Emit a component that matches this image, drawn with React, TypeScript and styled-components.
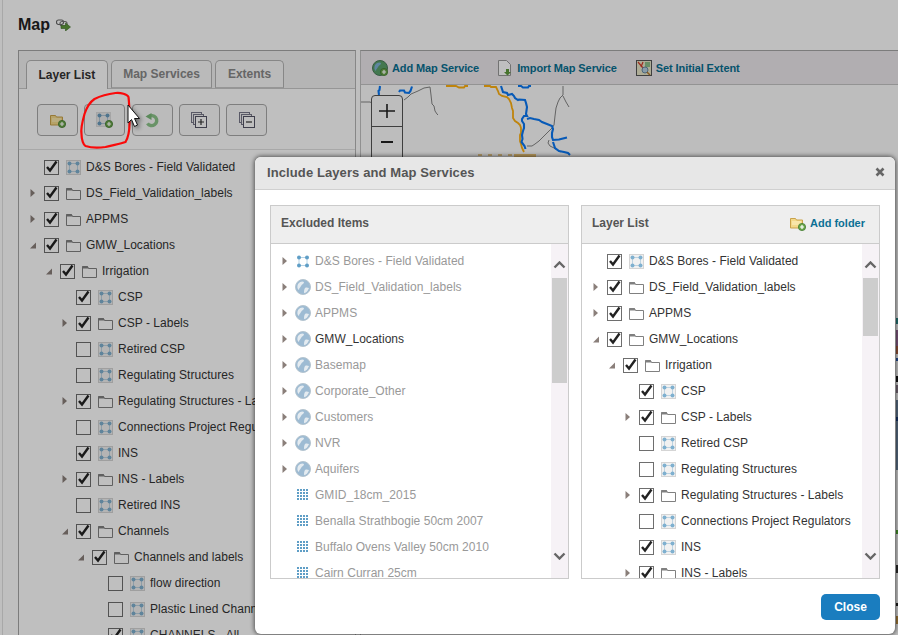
import React from "react";
import styled, { createGlobalStyle } from "styled-components";

type IconKind = "layer" | "layerPlain" | "folder" | "globe" | "grid";
type Arrow = "none" | "closed" | "open";
type Item = { label: string; depth: number; arrow: Arrow; checked: boolean; icon: IconKind };

const Layers: Item[] = [
    { label: "D&S Bores - Field Validated", depth: 0, arrow: "none", checked: true, icon: "layer" },
    { label: "DS_Field_Validation_labels", depth: 0, arrow: "closed", checked: true, icon: "folder" },
    { label: "APPMS", depth: 0, arrow: "closed", checked: true, icon: "folder" },
    { label: "GMW_Locations", depth: 0, arrow: "open", checked: true, icon: "folder" },
    { label: "Irrigation", depth: 1, arrow: "open", checked: true, icon: "folder" },
    { label: "CSP", depth: 2, arrow: "none", checked: true, icon: "layer" },
    { label: "CSP - Labels", depth: 2, arrow: "closed", checked: true, icon: "folder" },
    { label: "Retired CSP", depth: 2, arrow: "none", checked: false, icon: "layer" },
    { label: "Regulating Structures", depth: 2, arrow: "none", checked: false, icon: "layer" },
    { label: "Regulating Structures - Labels", depth: 2, arrow: "closed", checked: true, icon: "folder" },
    { label: "Connections Project Regulators", depth: 2, arrow: "none", checked: false, icon: "layer" },
    { label: "INS", depth: 2, arrow: "none", checked: true, icon: "layer" },
    { label: "INS - Labels", depth: 2, arrow: "closed", checked: true, icon: "folder" },
];

const MoreLayers: Item[] = [
    { label: "Retired INS", depth: 2, arrow: "none", checked: false, icon: "layer" },
    { label: "Channels", depth: 2, arrow: "open", checked: true, icon: "folder" },
    { label: "Channels and labels", depth: 3, arrow: "open", checked: true, icon: "folder" },
    { label: "flow direction", depth: 4, arrow: "none", checked: false, icon: "layer" },
    { label: "Plastic Lined Channels", depth: 4, arrow: "none", checked: false, icon: "layer" },
    { label: "CHANNELS - All", depth: 4, arrow: "none", checked: true, icon: "layer" },
];

const Excluded: { label: string; icon: IconKind; arrow: boolean; active?: boolean }[] = [
    { label: "D&S Bores - Field Validated", icon: "layerPlain", arrow: true },
    { label: "DS_Field_Validation_labels", icon: "globe", arrow: true },
    { label: "APPMS", icon: "globe", arrow: true },
    { label: "GMW_Locations", icon: "globe", arrow: true, active: true },
    { label: "Basemap", icon: "globe", arrow: true },
    { label: "Corporate_Other", icon: "globe", arrow: true },
    { label: "Customers", icon: "globe", arrow: true },
    { label: "NVR", icon: "globe", arrow: true },
    { label: "Aquifers", icon: "globe", arrow: true },
    { label: "GMID_18cm_2015", icon: "grid", arrow: false },
    { label: "Benalla Strathbogie 50cm 2007", icon: "grid", arrow: false },
    { label: "Buffalo Ovens Valley 50cm 2010", icon: "grid", arrow: false },
    { label: "Cairn Curran 25cm", icon: "grid", arrow: false },
];

function GreenPlus({ x, y }: { x: number; y: number }) {
    return (
        <g>
            <circle cx={x} cy={y} r="3.6" fill="#6fa84f" stroke="#3f7a2c" strokeWidth="0.8" />
            <path d={`M${x - 2} ${y}h4M${x} ${y - 2}v4`} stroke="#fff" strokeWidth="1.2" />
        </g>
    );
}

function LayerDots({ color }: { color: string }) {
    return (
        <g>
            <path d="M4 3.5h7M4 11.5h7M3.5 4v7M11.5 4v7" stroke={color} strokeWidth="1" opacity="0.45" />
            <circle cx="3.5" cy="3.5" r="2" fill={color} />
            <circle cx="11.5" cy="3.5" r="2" fill={color} />
            <circle cx="3.5" cy="11.5" r="2" fill={color} />
            <circle cx="11.5" cy="11.5" r="2" fill={color} />
        </g>
    );
}

function TreeIcon({ kind }: { kind: IconKind }) {
    if (kind === "layer") {
        return (
            <svg width="15" height="15" viewBox="0 0 15 15">
                <rect x="0.5" y="0.5" width="14" height="14" fill="#f1f1f1" stroke="#d5d5d5" />
                <LayerDots color="#7fb0cf" />
            </svg>
        );
    }
    if (kind === "layerPlain") {
        return (
            <svg width="16" height="15" viewBox="-0.5 0 16 15">
                <LayerDots color="#5f9ec6" />
            </svg>
        );
    }
    if (kind === "folder") {
        return (
            <svg width="15" height="15" viewBox="0 0 15 15">
                <path d="M0.5 2.5h5l1 2h8v9h-14z" fill="#fff" stroke="#808080" />
                <path d="M0.5 2h5l1 2.500h-6z" fill="#808080" />
            </svg>
        );
    }
    if (kind === "globe") {
        return (
            <svg width="16" height="16" viewBox="0 0 16 16">
                <circle cx="8" cy="8" r="7.5" fill="#9dbbd3" stroke="#b5c4cf" />
                <path d="M3 5c2-3 5-3 6-2 0 2-2 2-3 4s-2 2-2 4c-2-1-2-4-1-6z" fill="#e4ebf0" />
                <path d="M10 9c2-1 3 0 4 0-1 3-3 5-5 5 0-2 0-3 1-5z" fill="#e4ebf0" />
            </svg>
        );
    }
    const dots: React.ReactNode[] = [];
    for (let r = 0; r < 4; r++) {
        for (let c = 0; c < 4; c++) {
            dots.push(<rect key={`${r}-${c}`} x={2 + c * 3} y={2 + r * 3} width="2" height="2" fill="#5f9ec6" />);
        }
    }
    return (
        <svg width="16" height="16" viewBox="0 0 16 16">
            {dots}
        </svg>
    );
}

function CheckMark() {
    return (
        <svg width="15" height="15" viewBox="0 0 15 15">
            <path d="M3 7l3 3.500L12.500 1.500" fill="none" stroke="#222" strokeWidth="2.400" />
        </svg>
    );
}

function ExpandArrow({ kind }: { kind: Arrow }) {
    if (kind === "none") return null;
    return (
        <svg width="8" height="10" viewBox="0 0 8 10">
            {kind === "closed" ? <path d="M1.500 1l4.500 4-4.500 4z" fill="#8a7f7a" /> : <path d="M7 2.500v6h-6z" fill="#8a7f7a" />}
        </svg>
    );
}

function LayerRow({ item }: { item: Item }) {
    return (
        <TreeRow $depth={item.depth}>
            <ArrowSlot>
                <ExpandArrow kind={item.arrow} />
            </ArrowSlot>
            <CheckBox>{item.checked && <CheckMark />}</CheckBox>
            <TreeIcon kind={item.icon} />
            <RowLabel>{item.label}</RowLabel>
        </TreeRow>
    );
}

function ScrollBar({ thumb }: { thumb: number }) {
    return (
        <Track>
            <UpButton>
                <svg width="13" height="8" viewBox="0 0 13 8">
                    <path d="M1.500 6.500l5-5 5 5" fill="none" stroke="#666" strokeWidth="2.400" />
                </svg>
            </UpButton>
            <Thumb $height={thumb} />
            <Spacer />
            <DownButton>
                <svg width="13" height="8" viewBox="0 0 13 8">
                    <path d="M1.500 1.500l5 5 5-5" fill="none" stroke="#666" strokeWidth="2.400" />
                </svg>
            </DownButton>
        </Track>
    );
}

function FolderAdd() {
    return (
        <svg width="16" height="15" viewBox="0 0 16 15">
            <path d="M0.500 2.500h5l1 1.500h6v8h-12z" fill="#f3d98a" stroke="#c9a24a" />
            <path d="M2 6h9M2 8h9" stroke="#fff3c8" />
            <GreenPlus x={12} y={11} />
        </svg>
    );
}

function App() {
    return (
        <>
            <GlobalStyle />
            <Page>
                <TitleBar>
                    <PageTitle>Map</PageTitle>
                    <svg width="15" height="12" viewBox="0 0 15 12">
                        <rect x="0.500" y="1" width="7" height="4.500" rx="2" fill="none" stroke="#666" strokeWidth="1.200" />
                        <rect x="4" y="2.500" width="7" height="4.500" rx="2" fill="none" stroke="#777" strokeWidth="1.200" />
                        <path d="M5 6.500h4.500v-2.500l5 4-5 4v-2.500h-4.500z" fill="#5f9a3c" stroke="#3c6d25" strokeWidth="0.600" />
                    </svg>
                </TitleBar>
                <Workspace>
                    <LeftPane>
                        <TabBar>
                            <Tab $active>Layer List</Tab>
                            <Tab>Map Services</Tab>
                            <Tab>Extents</Tab>
                        </TabBar>
                        <ButtonBar>
                            <ToolButton>
                                <FolderAdd />
                            </ToolButton>
                            <ToolButton>
                                <svg width="17" height="16" viewBox="0 0 17 16">
                                    <rect x="0.500" y="0.500" width="14" height="14" fill="#e9e9e9" stroke="#ddd" />
                                    <LayerDots color="#6a9bbd" />
                                    <GreenPlus x={13} y={12} />
                                </svg>
                            </ToolButton>
                            <ToolButton>
                                <svg width="14" height="15" viewBox="0 0 14 15">
                                    <path d="M3.500 3.800a5 5 0 1 1-1 6.500" fill="none" stroke="#8cc48a" strokeWidth="3.400" />
                                    <path d="M6.500 0v7l-6-3.500z" fill="#7ab879" />
                                </svg>
                            </ToolButton>
                            <ToolButton>
                                <svg width="16" height="16" viewBox="0 0 16 16">
                                    <rect x="0.500" y="0.500" width="10" height="10" fill="#f2f2f2" stroke="#778" />
                                    <rect x="2.500" y="2.500" width="10" height="10" fill="#f2f2f2" stroke="#778" />
                                    <rect x="4.500" y="4.500" width="11" height="11" fill="#fff" stroke="#556" />
                                    <path d="M7 10h6M10 7v6" stroke="#333" strokeWidth="1.200" />
                                </svg>
                            </ToolButton>
                            <ToolButton>
                                <svg width="16" height="16" viewBox="0 0 16 16">
                                    <rect x="0.500" y="0.500" width="10" height="10" fill="#f2f2f2" stroke="#778" />
                                    <rect x="2.500" y="2.500" width="10" height="10" fill="#f2f2f2" stroke="#778" />
                                    <rect x="4.500" y="4.500" width="11" height="11" fill="#fff" stroke="#556" />
                                    <path d="M7 10h6" stroke="#333" strokeWidth="1.200" />
                                </svg>
                            </ToolButton>
                        </ButtonBar>
                        <LeftTree>
                            {[...Layers, ...MoreLayers].map(item => (
                                <LayerRow key={item.label} item={item} />
                            ))}
                        </LeftTree>
                    </LeftPane>
                    <RightPane>
                        <MapToolbar>
                            <MapAction>
                                <svg width="16" height="16" viewBox="0 0 16 16">
                                    <circle cx="8" cy="8" r="7.500" fill="#5aa06a" stroke="#4a7a5a" />
                                    <path d="M3 5c2-3 5-3 6-2 0 2-2 2-3 4s-2 2-2 4c-2-1-2-4-1-6z" fill="#7fb3d6" />
                                    <GreenPlus x={12} y={12} />
                                </svg>
                                Add Map Service
                            </MapAction>
                            <MapAction>
                                <svg width="15" height="16" viewBox="0 0 15 16">
                                    <path d="M0.500 0.500h8l4 4v11h-12z" fill="#fff" stroke="#999" />
                                    <path d="M8 9v3h-2l3.500 3.500 3.500-3.500h-2v-3z" fill="#5f9a3c" />
                                </svg>
                                Import Map Service
                            </MapAction>
                            <MapAction>
                                <svg width="16" height="16" viewBox="0 0 16 16">
                                    <rect x="0.500" y="0.500" width="15" height="15" fill="#e8e6c8" stroke="#555" />
                                    <path d="M2 2l5 6M7 2l-2 5" stroke="#d23b2a" strokeWidth="1.200" />
                                    <rect x="9" y="2" width="5" height="5" fill="#8cc08a" />
                                    <circle cx="9" cy="10" r="3" fill="#b6cfe2" stroke="#6689a3" />
                                    <path d="M11 12l3 3" stroke="#b5772e" strokeWidth="1.500" />
                                </svg>
                                Set Initial Extent
                            </MapAction>
                        </MapToolbar>
                        <MapCanvas>
                            <svg width="538" height="550" viewBox="360 85 538 550">
                                <g fill="none" stroke="#858585" strokeWidth="1">
                                    <path d="M360 102h9l2 1M403 100l4-3 3-3 7-3 6-3 6-1 1 8 1 9 2 2 1 5 2 3 1 1" />
                                    <path d="M562 86v9l-3 3-2 4-2 6-1 8-1 9-2 3-3 3-5 5-5 5-4 3-3 2-5 0M562 96l3 6 3 5M548 140l-1 3 2 3 6 3 5 3" />
                                </g>
                                <g fill="none" stroke="#ffb010" strokeWidth="1.800">
                                    <path d="M445 86h10l3 1.500h5l1-1.500h3" />
                                    <path d="M483 86h6l1 1h5l2 4 1 3 3 2 5 1 2 2 2 4 1 5 1 3v7l2 3 3 2 2 2 1 3v5l-1 2v6l1 3 1 4 2 4" />
                                </g>
                                <g fill="none" stroke="#0a78f5" strokeWidth="2.100">
                                    <path d="M379 86l-.5 4-1 1 .5 4M398 92l1-1.500h4l1 2 4 .5 1.500-2 1.500-4.500" />
                                    <path d="M500 86l1 3 1 3 4 1 1 2 4-1 2 2 1 2 3 2 1-.5 6 .5 1 3 1 4-1 7 1 2h-3l-2 3v2l2 3v4l-1 3-1 4 .5 4-1 3 3 4 1 3" />
                                    <path d="M526 119l3-1 4 1 5 1 3 2 5 2 5 2 1 3-1 4v4l1 3 6-.5 4-1 4-1M552 142l1 3 1 3 4 3 5 1 4 1 2 2M517 86h3l2 1.500h5l1-1.500h2" />
                                </g>
                                <rect x="513" y="154" width="22" height="4" fill="#f0c878" />
                                <path d="M477 155h36" stroke="#e8c888" strokeWidth="2" strokeDasharray="4 6" />
                                <rect x="895" y="318" width="3" height="6" fill="#2b8a8a" />
                                <rect x="895" y="330" width="3" height="16" fill="#9a6a9a" />
                                <rect x="895" y="346" width="3" height="8" fill="#b06040" />
                                <rect x="895" y="358" width="3" height="3" fill="#2a5ab0" />
                                <rect x="895" y="376" width="3" height="6" fill="#111" />
                                <rect x="895" y="385" width="3" height="8" fill="#8a7a8a" />
                                <rect x="895" y="400" width="3" height="70" fill="#6a84a0" />
                                <rect x="895" y="417" width="3" height="4" fill="#1a3a7a" />
                                <rect x="895" y="530" width="3" height="4" fill="#50b030" />
                                <rect x="895" y="565" width="3" height="8" fill="#333" />
                                <rect x="895" y="603" width="3" height="3" fill="#222" />
                                <rect x="895" y="616" width="3" height="8" fill="#c09040" />
                            </svg>
                            <ZoomControl>
                                <ZoomButton>
                                    <svg width="16" height="14" viewBox="0 0 16 14">
                                        <path d="M0 7h16M8 0v14" stroke="#222" strokeWidth="1.600" />
                                    </svg>
                                </ZoomButton>
                                <ZoomButton>
                                    <svg width="12" height="2" viewBox="0 0 12 2">
                                        <path d="M0 1h12" stroke="#222" strokeWidth="2" />
                                    </svg>
                                </ZoomButton>
                            </ZoomControl>
                        </MapCanvas>
                    </RightPane>
                </Workspace>

                <Overlay />

                <Modal>
                    <ModalHeader>
                        <ModalTitle>Include Layers and Map Services</ModalTitle>
                        <svg width="10" height="10" viewBox="0 0 10 10">
                            <path d="M1.500 1.500l7 7M8.500 1.500l-7 7" stroke="#666" strokeWidth="2.600" />
                        </svg>
                    </ModalHeader>
                    <ModalBody>
                        <ListPanel>
                            <PanelHeader>
                                <PanelTitle>Excluded Items</PanelTitle>
                            </PanelHeader>
                            <PanelBody>
                                <PanelList>
                                    {Excluded.map(item => (
                                        <ExcludedRow key={item.label} $active={item.active}>
                                            <ExcludedArrow>
                                                <ExpandArrow kind={item.arrow ? "closed" : "none"} />
                                            </ExcludedArrow>
                                            <TreeIcon kind={item.icon} />
                                            <RowLabel>{item.label}</RowLabel>
                                        </ExcludedRow>
                                    ))}
                                </PanelList>
                                <ScrollBar thumb={105} />
                            </PanelBody>
                        </ListPanel>
                        <ListPanel>
                            <PanelHeader>
                                <PanelTitle>Layer List</PanelTitle>
                                <AddFolder>
                                    <FolderAdd />
                                    Add folder
                                </AddFolder>
                            </PanelHeader>
                            <PanelBody>
                                <PanelList>
                                    {Layers.map(item => (
                                        <LayerRow key={item.label} item={item} />
                                    ))}
                                </PanelList>
                                <ScrollBar thumb={58} />
                            </PanelBody>
                        </ListPanel>
                    </ModalBody>
                    <ModalFooter>
                        <CloseButton>Close</CloseButton>
                    </ModalFooter>
                </Modal>

                <Scribble width="60" height="62" viewBox="78 90 60 62">
                    <path
                        d="M128.500 97c-1-3-8-4.500-13-4-8 1-15 3-21 6-6 4-8 9-10 15-2 7-4 14-3 20 0 6 2 11 4 12 6 2 13 2 20 1 7-2 15-3 20-5 3-5 4-12 4-19 0-9 0-18-1-26"
                        fill="none"
                        stroke="#fa0a0a"
                        strokeWidth="2.200"
                        strokeLinecap="round"
                    />
                </Scribble>
                <Cursor width="13" height="24" viewBox="0 0 13 24">
                    <path d="M1 1v18l3.500-3.500 3 7 3-1.500-3-6.500h5z" fill="#fff" stroke="#111" strokeWidth="1" />
                </Cursor>
            </Page>
        </>
    );
}

const GlobalStyle = createGlobalStyle`
    html, body {
        margin: 0;
        padding: 0;
        background: #fff;
    }
    * {
        box-sizing: border-box;
    }
`;

const Page = styled.div`
    position: relative;
    width: 898px;
    height: 635px;
    overflow: hidden;
    background: #fff;
    font-family: "Liberation Sans", Arial, sans-serif;
    font-size: 12px;
    color: #444;
    display: flex;
    flex-direction: column;
    padding-left: 2px;
`;

const TitleBar = styled.div`
    height: 50px;
    flex: none;
    display: flex;
    align-items: center;
    gap: 6px;
    padding-left: 15px;
    border-left: 1px solid #e0e0e0;
`;

const PageTitle = styled.h1`
    margin: 0;
    font-size: 16px;
    font-weight: bold;
    color: #222;
`;

const Workspace = styled.div`
    flex: 1;
    min-height: 0;
    display: flex;
    margin-left: 0;
    padding-left: 15px;
    border-left: 1px solid #e0e0e0;
`;

const LeftPane = styled.div`
    width: 338px;
    flex: none;
    display: flex;
    flex-direction: column;
    border-top: 1px solid #a6a6a6;
    border-left: 1px solid #a6a6a6;
    border-right: 1px solid #b5b5b5;
`;

const TabBar = styled.div`
    height: 38px;
    flex: none;
    display: flex;
    align-items: flex-end;
    gap: 3px;
    padding-left: 7px;
    background: #f2f2f2;
    border-bottom: 1px solid #c8c8c8;
`;

const Tab = styled.div<{ $active?: boolean }>`
    height: ${p => (p.$active ? 29 : 28)}px;
    padding: 0 11.5px;
    margin-bottom: ${p => (p.$active ? -1 : 0)}px;
    display: flex;
    align-items: center;
    font-weight: bold;
    border: 1px solid #b5b5b5;
    border-bottom: ${p => (p.$active ? "none" : "1px solid #c8c8c8")};
    border-radius: 5px 5px 0 0;
    background: ${p => (p.$active ? "#fff" : "#f8f8f8")};
    color: ${p => (p.$active ? "#333" : "#888")};
`;

const ButtonBar = styled.div`
    height: 61px;
    flex: none;
    display: flex;
    gap: 6.3px;
    padding: 15px 0 0 18px;
    border-bottom: 1px solid #e0e0e0;
`;

const ToolButton = styled.div`
    width: 41px;
    height: 32px;
    display: flex;
    align-items: center;
    justify-content: center;
    border: 1px solid #a8a8a8;
    border-radius: 4px;
    background: #fafafa;
`;

const LeftTree = styled.div`
    flex: 1;
    min-height: 0;
    padding-top: 4px;
    overflow: hidden;
`;

const TreeRow = styled.div<{ $depth: number }>`
    height: 26px;
    display: flex;
    align-items: center;
    padding-left: ${p => 8 + p.$depth * 16}px;
    color: #333;
    white-space: nowrap;
`;

const ArrowSlot = styled.div`
    width: 17px;
    flex: none;
    display: flex;
    align-items: center;
    padding-left: 2px;
`;

const CheckBox = styled.div`
    width: 15px;
    height: 15px;
    flex: none;
    margin-right: 7px;
    background: #fff;
    border: 1px solid #6e6e6e;
    display: flex;
    align-items: center;
    justify-content: center;

    svg {
        flex: none;
    }
`;

const RowLabel = styled.span`
    margin-left: 5px;
    line-height: 14px;
    letter-spacing: 0.03px;
`;

const RightPane = styled.div`
    flex: 1;
    min-width: 0;
    margin-left: 4px;
    display: flex;
    flex-direction: column;
    border-top: 1px solid #a6a6a6;
    border-left: 1px solid #c0c0c0;
`;

const MapToolbar = styled.div`
    height: 34px;
    flex: none;
    display: flex;
    align-items: center;
    gap: 19px;
    padding-left: 11px;
    background: #ece8ec;
    border-bottom: 1px solid #c4c4c4;
`;

const MapAction = styled.div`
    display: flex;
    align-items: center;
    gap: 4px;
    font-size: 11px;
    font-weight: bold;
    letter-spacing: -0.1px;
    color: #076f91;
`;

const MapCanvas = styled.div`
    flex: 1;
    position: relative;
    overflow: hidden;
    background: #fcfcfc;

    svg {
        display: block;
    }
`;

const ZoomControl = styled.div`
    position: absolute;
    left: 10px;
    top: 10px;
    width: 32px;
    background: #fcfcfc;
    border: 1px solid #555;
    border-radius: 4px;
`;

const ZoomButton = styled.div`
    height: 30px;
    display: flex;
    align-items: center;
    justify-content: center;

    & + & {
        height: 36px;
        padding-bottom: 6px;
        border-top: 1px solid #555;
    }
`;

const Overlay = styled.div`
    position: absolute;
    inset: 0;
    background: rgba(0, 0, 0, 0.25);
`;

const Modal = styled.div`
    position: absolute;
    left: 255px;
    top: 157px;
    width: 640px;
    height: 477px;
    background: #fff;
    border-radius: 6px;
    box-shadow: 0 0 4px 1px rgba(0, 0, 0, 0.55);
    display: flex;
    flex-direction: column;
`;

const ModalHeader = styled.div`
    height: 33px;
    flex: none;
    display: flex;
    align-items: center;
    justify-content: space-between;
    padding: 0 10px 2px 12px;
    background: #e7e7e7;
    border-bottom: 1px solid #d0d0d0;
    border-radius: 6px 6px 0 0;
`;

const ModalTitle = styled.div`
    font-size: 13px;
    font-weight: bold;
    letter-spacing: 0.1px;
    color: #555;
`;

const ModalBody = styled.div`
    display: flex;
    gap: 12px;
    padding: 15px 15px 0;
`;

const ListPanel = styled.div`
    width: 299px;
    height: 374px;
    display: flex;
    flex-direction: column;
    border: 1px solid #cbcbcb;
`;

const PanelHeader = styled.div`
    height: 38px;
    flex: none;
    display: flex;
    align-items: center;
    justify-content: space-between;
    padding: 0 14px 3px 10px;
    background: #eee;
    border-bottom: 1px solid #cbcbcb;
`;

const PanelTitle = styled.div`
    font-weight: bold;
    color: #555;
`;

const AddFolder = styled.div`
    display: flex;
    align-items: center;
    gap: 4px;
    font-size: 11px;
    font-weight: bold;
    color: #0b7094;
`;

const PanelBody = styled.div`
    flex: 1;
    min-height: 0;
    display: flex;
`;

const PanelList = styled.div`
    flex: 1;
    min-width: 0;
    padding-top: 4px;
    overflow: hidden;
`;

const ExcludedRow = styled.div<{ $active?: boolean }>`
    height: 26px;
    display: flex;
    align-items: center;
    padding-left: 10px;
    white-space: nowrap;
    color: ${p => (p.$active ? "#333" : "#999")};

    ${RowLabel} {
        margin-left: 4px;
    }
`;

const ExcludedArrow = styled.div`
    width: 14px;
    flex: none;
    display: flex;
    align-items: center;
`;

const Track = styled.div`
    width: 17px;
    flex: none;
    display: flex;
    flex-direction: column;
    background: #f6f2f6;
`;

const UpButton = styled.div`
    height: 34px;
    flex: none;
    display: flex;
    align-items: center;
    justify-content: center;
    padding-top: 8px;
`;

const DownButton = styled.div`
    height: 34px;
    flex: none;
    display: flex;
    align-items: center;
    justify-content: center;
    padding-bottom: 10px;
`;

const Thumb = styled.div<{ $height: number }>`
    height: ${p => p.$height}px;
    flex: none;
    margin: 0 1px;
    background: #cdcdcd;
`;

const Spacer = styled.div`
    flex: 1;
`;

const ModalFooter = styled.div`
    display: flex;
    justify-content: flex-end;
    padding: 15px 15px 0;
`;

const CloseButton = styled.button`
    width: 59px;
    height: 26px;
    border: none;
    border-radius: 5px;
    background: #1a7dbf;
    color: #fff;
    font-family: inherit;
    font-size: 12px;
    font-weight: bold;
`;

const Scribble = styled.svg`
    position: absolute;
    left: 78px;
    top: 90px;
`;

const Cursor = styled.svg`
    position: absolute;
    left: 127px;
    top: 104px;
    filter: drop-shadow(2px 2px 2px rgba(0, 0, 0, 0.45));
`;

export default App;
